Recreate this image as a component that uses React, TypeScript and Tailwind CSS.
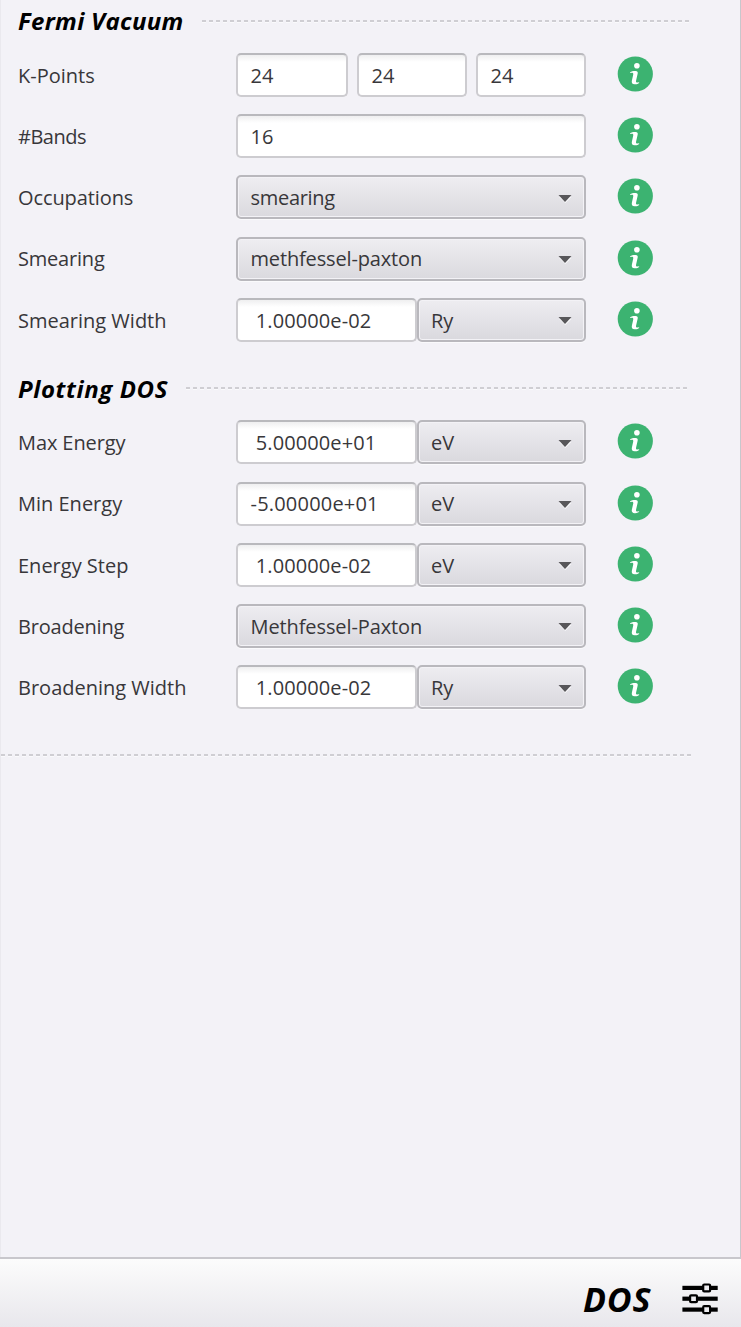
import type { ReactNode } from "react";

function InfoIcon() {
  return (
    <svg width="36" height="36" viewBox="0 0 36 36" className="block shrink-0">
      <circle cx="18.3" cy="18" r="17.6" fill="#3cb371" />
      <circle cx="19.9" cy="9.8" r="2.8" fill="#fff" />
      <path
        d="M13.1 16.2 C14.3 15.3 16.7 14.8 18.6 14.9 C20.4 15 21 16 20.7 17.6 L19.1 24.4 C18.8 25.8 19.2 26.5 20.3 26.5 L22.3 26.2 C22.5 27.3 19.8 28.5 17.6 28.3 C15.1 28.1 14.4 26.6 14.9 24.4 L16.2 18.7 C16.5 17.3 16 16.8 15 16.8 L13.3 17 Z"
        fill="#fff"
      />
    </svg>
  );
}

function TextBox({ value, className = "", textClass = "" }: { value: string; className?: string; textClass?: string }) {
  return (
    <div
      className={`flex h-[44px] items-center whitespace-pre rounded-[5px] border-2 border-[#cdccd0] border-t-[#b9b9bd] bg-[linear-gradient(#efeff0_0,#fff_7px)] pl-[12.5px] pt-[1.6px] ${className}`}
    >
      <span className={textClass}>{value}</span>
    </div>
  );
}

function Combo({ value, className = "", textClass = "" }: { value: string; className?: string; textClass?: string }) {
  return (
    <div
      className={`flex h-[44px] items-center justify-between rounded-[5px] border-2 border-[#b9b8bd] bg-[linear-gradient(#eeedf1,#dad9de)] pl-[12.5px] pr-[12px] pt-[1.6px] shadow-[inset_0_0_0_1px_#f3f2f6,0_1px_0_#fafafc] ${className}`}
    >
      <span className={textClass}>{value}</span>
      <svg width="14" height="9" viewBox="0 0 14 9" className="block">
        <path d="M1.2 3 H13.4 L7.3 9 Z" fill="#fafafc" />
        <path d="M0.5 1 H13.5 L7 8 Z" fill="#58575a" />
      </svg>
    </div>
  );
}

function Row({ label, labelClass = "", children }: { label: string; labelClass?: string; children: ReactNode }) {
  return (
    <div className="flex h-[61.25px] items-start pl-[18px]">
      <div className={`flex h-[44px] w-[218px] shrink-0 items-center whitespace-nowrap pt-[1.6px] ${labelClass}`}>
        <span>{label}</span>
      </div>
      <div className="flex w-[350px] shrink-0">{children}</div>
      <div className="ml-[31px] mt-[3px]">
        <InfoIcon />
      </div>
    </div>
  );
}

function Quantity({ value, unit, textClass = "tracking-[0.1px]" }: { value: string; unit: string; textClass?: string }) {
  return (
    <>
      <TextBox value={value} className="w-[180.5px]" textClass={textClass} />
      <Combo value={unit} className="w-[169.5px]" />
    </>
  );
}

function Dashes({ className = "" }: { className?: string }) {
  return (
    <div className={`flex flex-col ${className}`}>
      <div className="h-[2px] bg-[repeating-linear-gradient(90deg,#cfced3_0_4px,transparent_4px_7px)]" />
      <div className="h-px bg-[repeating-linear-gradient(90deg,#fafafc_0_4px,transparent_4px_7px)]" />
    </div>
  );
}

function TuneIcon() {
  return (
    <svg width="36" height="32" viewBox="0 0 36 32" className="block">
      <g fill="#000">
        <rect x="0.4" y="2.8" width="35.3" height="4.2" />
        <rect x="0.4" y="13.6" width="35.3" height="4.2" />
        <rect x="0.4" y="24.5" width="35.3" height="4.2" />
      </g>
      <g fill="#ecebef" stroke="#000" strokeWidth="2.2">
        <rect x="21.2" y="1.5" width="6.9" height="6.9" rx="1" />
        <rect x="8.1" y="12.3" width="6.9" height="6.9" rx="1" />
        <rect x="21.2" y="23.2" width="6.9" height="6.9" rx="1" />
      </g>
    </svg>
  );
}

export default function App() {
  return (
    <div className="flex h-[1327px] w-[741px] flex-col overflow-hidden bg-[#f3f2f7] font-['Open_Sans','Noto_Sans',sans-serif] text-[20px] leading-[28px] text-[#38373a]">
      <main className="flex h-[1257px] flex-col border-l border-r border-l-[#eae9ee] border-r-[#c8c7cc]">
        <div className="-ml-px flex h-[52.75px] items-start pl-[18px]">
          <h2 className="w-[184px] shrink-0 whitespace-nowrap pt-[5px] text-[24px] font-bold italic leading-[32px] tracking-[0.3px] text-black">
            Fermi Vacuum
          </h2>
          <Dashes className="mt-[20px] w-[487px]" />
        </div>
        <div className="-ml-px">
          <Row label="K-Points">
            <TextBox value="24" className="w-[112px]" />
            <TextBox value="24" className="ml-[9px] w-[110px]" />
            <TextBox value="24" className="ml-[9px] w-[110px]" />
          </Row>
          <Row label="#Bands" labelClass="tracking-[-0.5px]">
            <TextBox value="16" className="w-[350px]" />
          </Row>
          <Row label="Occupations" labelClass="tracking-[-0.1px]">
            <Combo value="smearing" className="w-[350px]" textClass="tracking-[-0.3px]" />
          </Row>
          <Row label="Smearing" labelClass="tracking-[-0.2px]">
            <Combo value="methfessel-paxton" className="w-[350px]" textClass="tracking-[-0.15px]" />
          </Row>
          <Row label="Smearing Width">
            <Quantity value=" 1.00000e-02" unit="Ry" />
          </Row>
        </div>
        <div className="-ml-px flex h-[61.25px] items-start pl-[18px]">
          <h2 className="w-[168px] shrink-0 whitespace-nowrap pt-[14px] text-[24px] font-bold italic leading-[32px] tracking-[0.6px] text-black">
            Plotting DOS
          </h2>
          <Dashes className="mt-[28px] w-[501px]" />
        </div>
        <div className="-ml-px">
          <Row label="Max Energy" labelClass="tracking-[-0.1px]">
            <Quantity value=" 5.00000e+01" unit="eV" />
          </Row>
          <Row label="Min Energy">
            <Quantity value="-5.00000e+01" unit="eV" textClass="tracking-[0.2px]" />
          </Row>
          <Row label="Energy Step">
            <Quantity value=" 1.00000e-02" unit="eV" />
          </Row>
          <Row label="Broadening" labelClass="tracking-[-0.2px]">
            <Combo value="Methfessel-Paxton" className="w-[350px]" textClass="tracking-[-0.1px]" />
          </Row>
          <Row label="Broadening Width">
            <Quantity value=" 1.00000e-02" unit="Ry" />
          </Row>
        </div>
        <Dashes className="mt-[27.5px] w-[690px]" />
      </main>
      <footer className="flex h-[70px] items-start justify-end border-t-2 border-[#c8c7cc] bg-[linear-gradient(#fcfcfc,#e8e7ec)] pr-[23px]">
        <span className="mr-[30.5px] mt-[20px] text-[34px] font-bold italic leading-[40px] tracking-[0.9px] text-black">
          DOS
        </span>
        <div className="mt-[24px]">
          <TuneIcon />
        </div>
      </footer>
    </div>
  );
}
